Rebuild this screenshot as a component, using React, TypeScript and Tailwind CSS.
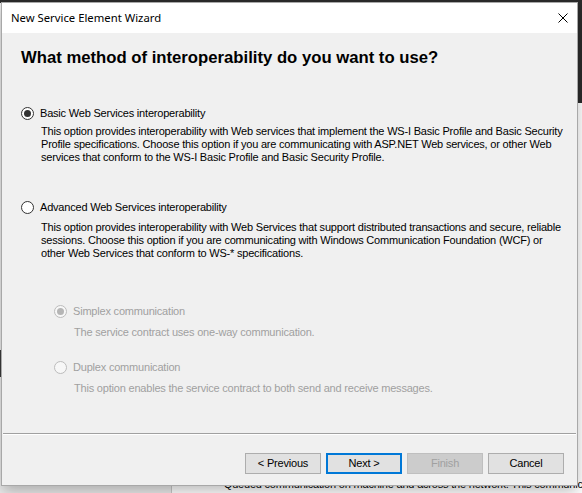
import React from 'react';

const sans = { fontFamily: '"Liberation Sans", Arial, sans-serif' };

function Radio({ checked = false, disabled = false }: { checked?: boolean; disabled?: boolean }) {
  return (
    <span
      className={
        'flex h-[13px] w-[13px] shrink-0 items-center justify-center rounded-full border ' +
        (disabled ? 'border-[#bcbcbc] bg-[#f7f7f7]' : 'border-[#333333] bg-white')
      }
    >
      {checked && (
        <span className={'h-[7px] w-[7px] rounded-full ' + (disabled ? 'bg-[#b5b5b5]' : 'bg-[#333333]')} />
      )}
    </span>
  );
}

function OptionRow({
  label,
  checked,
  disabled,
  className,
}: {
  label: string;
  checked?: boolean;
  disabled?: boolean;
  className?: string;
}) {
  return (
    <div className={'flex h-[13px] items-center gap-[6px] ' + (className ?? '')}>
      <Radio checked={checked} disabled={disabled} />
      <span
        className={
          'whitespace-nowrap text-[11px] leading-[13px] tracking-[-0.2px] ' +
          (disabled ? 'text-[#a0a0a0]' : 'text-black')
        }
      >
        {label}
      </span>
    </div>
  );
}

function WizardButton({
  children,
  variant = 'normal',
}: {
  children: React.ReactNode;
  variant?: 'normal' | 'default' | 'disabled';
}) {
  const styles = {
    normal: 'border border-[#adadad] bg-[#e1e1e1] text-black',
    default: 'border-2 border-[#0078d7] bg-[#e1e1e1] text-black',
    disabled: 'border border-[#bfbfbf] bg-[#cccccc] text-[#a0a0a0]',
  };
  return (
    <button
      className={
        'flex h-[21px] w-[76px] items-center justify-center text-[11px] tracking-[-0.2px] ' + styles[variant]
      }
    >
      {children}
    </button>
  );
}

export default function App() {
  return (
    <div className="relative h-[493px] w-[582px] overflow-hidden bg-[#eeeeee]" style={sans}>
      {/* desktop behind the dialog */}
      <div className="h-[3px] bg-[#2b2b2b]" />
      <div className="flex h-[490px]">
        <div className="w-[172px] shrink-0 border-r border-[#c9c9c9] bg-[#ebebeb]" />
        <div className="min-w-0 flex-1 bg-white pl-[43px] pt-[475px] text-[11px] leading-[13px] tracking-[-0.2px] text-black">
          <p className="whitespace-nowrap">– Queued communication on machine and across the network. This communication</p>
          <p className="whitespace-nowrap">be installed.</p>
        </div>
      </div>
      <div className="absolute right-0 top-0 h-[103px] w-[5px] bg-[#2b2b2b]" />
      <div className="absolute left-0 top-[350px] h-[27px] w-[2px] bg-[#3a3a3a]" />

      {/* dialog window */}
      <div className="absolute left-[2px] top-[3px] flex h-[482px] w-[575px] flex-col bg-[#f0f0f0] shadow-[0_0_0_1px_#a8a8a8,0_6px_14px_rgba(0,0,0,0.28)]">
        <div className="flex h-[30px] items-center justify-between bg-white pl-[9px] pr-[9px]">
          <span className="text-[11.3px] text-black" style={{ fontFamily: '"Noto Sans", "Open Sans", sans-serif' }}>
            New Service Element Wizard
          </span>
          <svg width="10" height="10" viewBox="0 0 10 10">
            <path d="M0.5 0.5 L9.5 9.5 M9.5 0.5 L0.5 9.5" stroke="#000" strokeWidth="1" />
          </svg>
        </div>

        <div className="flex flex-1 flex-col pl-[19px]">
          <h1 className="mt-[16px] whitespace-nowrap text-[16.7px] font-bold leading-[18px] text-black">
            What method of interoperability do you want to use?
          </h1>

          <OptionRow className="mt-[40px]" label="Basic Web Services interoperability" checked />
          <p className="ml-[20px] mt-[5px] whitespace-nowrap text-[11px] leading-[13px] tracking-[-0.2px] text-black">
            This option provides interoperability with Web services that implement the WS-I Basic Profile and Basic Security
            <br />
            Profile specifications. Choose this option if you are communicating with ASP.NET Web services, or other Web
            <br />
            services that conform to the WS-I Basic Profile and Basic Security Profile.
          </p>

          <OptionRow className="mt-[37px]" label="Advanced Web Services interoperability" />
          <p className="ml-[20px] mt-[7px] whitespace-nowrap text-[11px] leading-[13px] tracking-[-0.2px] text-black">
            This option provides interoperability with Web Services that support distributed transactions and secure, reliable
            <br />
            sessions. Choose this option if you are communicating with Windows Communication Foundation (WCF) or
            <br />
            other Web Services that conform to WS-* specifications.
          </p>

          <div className="ml-[33px]">
            <OptionRow className="mt-[45px]" label="Simplex communication" checked disabled />
            <p className="ml-[20px] mt-[8px] whitespace-nowrap text-[11px] leading-[13px] tracking-[-0.2px] text-[#a0a0a0]">
              The service contract uses one-way communication.
            </p>
            <OptionRow className="mt-[22px]" label="Duplex communication" disabled />
            <p className="ml-[20px] mt-[8px] whitespace-nowrap text-[11px] leading-[13px] tracking-[-0.2px] text-[#a0a0a0]">
              This option enables the service contract to both send and receive messages.
            </p>
          </div>

          <div className="-ml-[19px] mt-auto">
            <div className="mx-[1px] h-px bg-[#a0a0a0]" />
            <div className="mx-[1px] h-px bg-white" />
            <div className="flex justify-end gap-[5px] pb-[11px] pr-[13px] pt-[18px]">
              <WizardButton>&lt; Previous</WizardButton>
              <WizardButton variant="default">Next &gt;</WizardButton>
              <WizardButton variant="disabled">Finish</WizardButton>
              <WizardButton>Cancel</WizardButton>
            </div>
          </div>
        </div>
      </div>
    </div>
  );
}
